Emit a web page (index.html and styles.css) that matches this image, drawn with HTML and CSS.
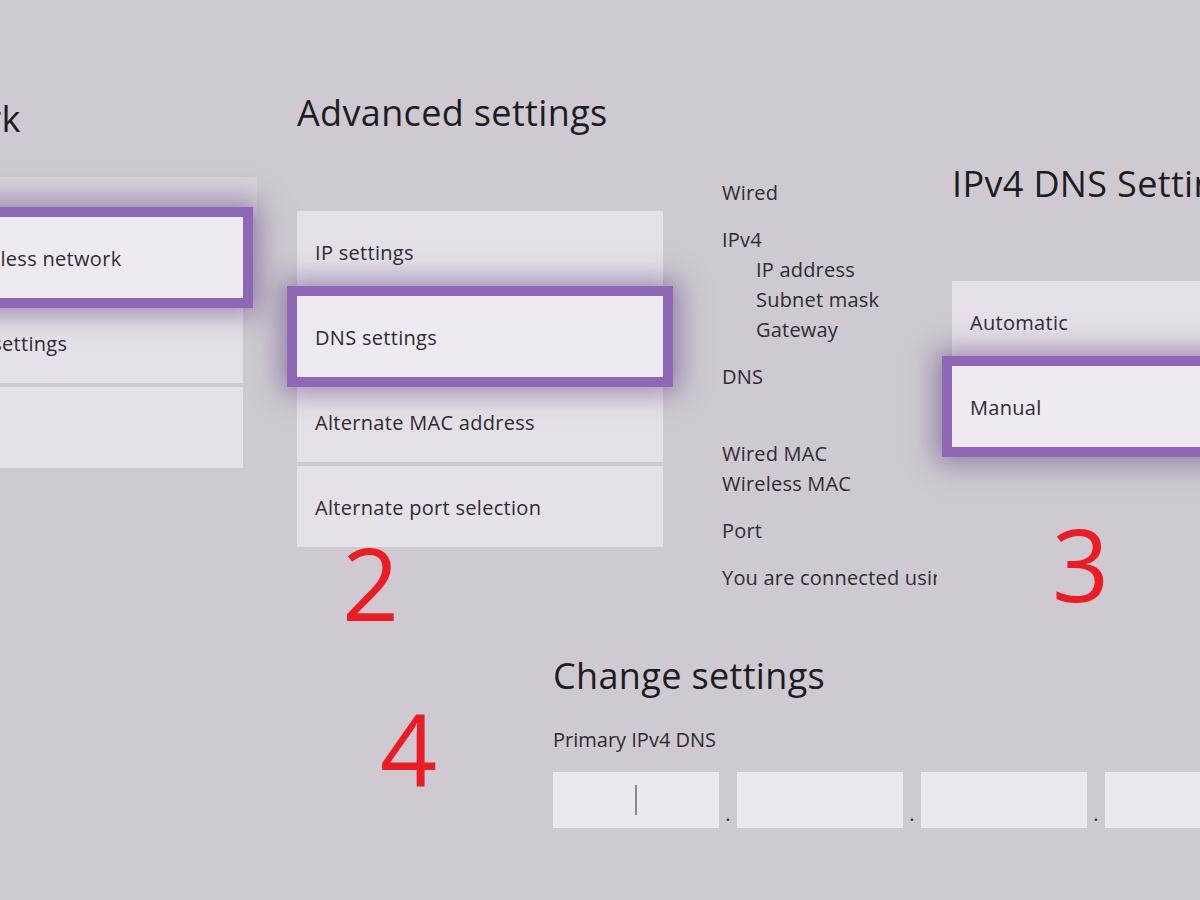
FILE: index.html
```html
<!DOCTYPE html>
<html lang="en">
<head>
    <meta charset="UTF-8">
    <title>Xbox DNS settings</title>
    <link rel="stylesheet" href="styles.css">
</head>
<body>
    <div class="stage">
        <div class="top">
            <section class="panel panel-net">
                <h2>Network</h2>
                <div class="list">
                    <div class="item focus">Set up wireless network</div>
                    <div class="item">Advanced settings</div>
                    <div class="item"></div>
                </div>
            </section>

            <section class="panel panel-adv">
                <h2>Advanced settings</h2>
                <div class="list">
                    <div class="item">IP settings</div>
                    <div class="item focus">DNS settings</div>
                    <div class="item">Alternate MAC address</div>
                    <div class="item">Alternate port selection</div>
                </div>
            </section>

            <section class="info">
                <div class="group">Wired</div>
                <div class="group">
                    IPv4
                    <div class="sub">IP address</div>
                    <div class="sub">Subnet mask</div>
                    <div class="sub">Gateway</div>
                </div>
                <div class="group">DNS<br>&nbsp;</div>
                <div class="group">Wired MAC<br>Wireless MAC</div>
                <div class="group">Port</div>
                <div class="group">You are connected using</div>
            </section>

            <section class="panel panel-dns">
                <h2>IPv4 DNS Settings</h2>
                <div class="list">
                    <div class="item">Automatic</div>
                    <div class="item focus">Manual</div>
                </div>
            </section>
        </div>

        <section class="change">
            <h2>Change settings</h2>
            <div class="label">Primary IPv4 DNS</div>
            <div class="octets">
                <div class="octet"><span class="caret"></span></div>
                <span class="dot">.</span>
                <div class="octet"></div>
                <span class="dot">.</span>
                <div class="octet"></div>
                <span class="dot">.</span>
                <div class="octet"></div>
            </div>
        </section>

        <span class="step step-2">2</span>
        <span class="step step-3">3</span>
        <span class="step step-4">4</span>
    </div>
</body>
</html>
```

FILE: styles.css
```css
* {
    margin: 0;
    padding: 0;
    box-sizing: border-box;
}
html, body {
    width: 1200px;
    height: 900px;
    overflow: hidden;
}
body {
    font-family: 'Open Sans', 'Noto Sans', sans-serif;
    background: #cfcad1;
    color: #2e2c30;
}
.stage {
    position: relative;
    width: 1200px;
    height: 900px;
}
h2 {
    font-size: 36px;
    font-weight: 400;
    line-height: 1;
    letter-spacing: 0.35px;
    color: #1d1c1f;
    white-space: nowrap;
}

/* top row of screens */
.top {
    display: flex;
    align-items: flex-start;
    height: 610px;
    margin-left: -125px;
}
.panel {
    flex: none;
    width: 366px;
}
.panel-net { padding-top: 101px; width: 368px; }
.panel-adv { padding-top: 95px; margin-left: 54px; }
.panel-dns { padding-top: 166px; margin-left: 15px; }

.list {
    position: relative;
    display: flex;
    flex-direction: column;
    gap: 4px;
    margin-top: 80px;
}
.panel-net .list::before {
    content: "";
    position: absolute;
    left: 0;
    right: -14px;
    top: -40px;
    height: 40px;
    background: #d8d3da;
}
.panel-dns .list { margin-top: 79px; }

.item {
    height: 81px;
    display: flex;
    align-items: center;
    padding: 3px 0 0 18px;
    background: #e6e1e8;
    font-size: 20px;
    line-height: 1;
    letter-spacing: 0.3px;
    white-space: nowrap;
}
.item.focus {
    position: relative;
    z-index: 1;
    background: #efeaf2;
    box-shadow: 0 0 0 10px #8e68b6, 0 0 26px 16px rgba(82, 50, 118, 0.5);
}

/* connection details column */
.info {
    flex: none;
    width: 215px;
    margin-left: 59px;
    padding-top: 178px;
    overflow: hidden;
    white-space: nowrap;
    font-size: 20px;
    line-height: 30px;
    letter-spacing: 0.2px;
}
.info .group + .group {
    margin-top: 17px;
}
.info .sub {
    padding-left: 34px;
}

/* bottom screen */
.change {
    padding-top: 48px;
    padding-left: 553px;
}
.change .label {
    margin-top: 36px;
    font-size: 20px;
    line-height: 1;
}
.octets {
    display: flex;
    margin-top: 22px;
}
.octet {
    flex: none;
    width: 166px;
    height: 56px;
    background: #ede7ef;
    display: flex;
    align-items: center;
    justify-content: center;
}
.caret {
    width: 2px;
    height: 30px;
    background: #8a8590;
}
.dot {
    flex: none;
    width: 18px;
    display: flex;
    align-items: flex-end;
    justify-content: center;
    padding-bottom: 4px;
    font-size: 20px;
    line-height: 1;
    color: #2e2c30;
}

/* red step numbers drawn over the screens */
.step {
    position: absolute;
    font-size: 100px;
    line-height: 0.72;
    color: #ec1c24;
}
.step-2 { left: 342px; top: 546px; }
.step-3 { left: 1052px; top: 527px; }
.step-4 { left: 380px; top: 712px; }
```
